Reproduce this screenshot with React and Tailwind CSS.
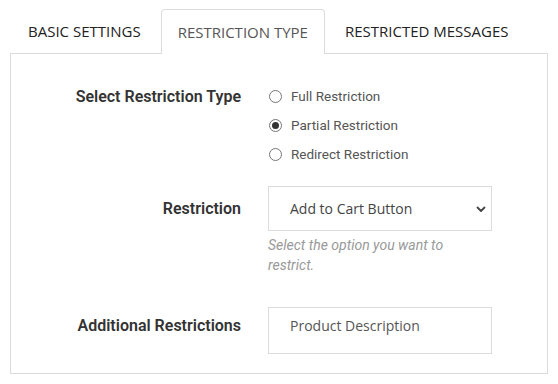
import React, { useState } from "react";

const tabs = ["BASIC SETTINGS", "RESTRICTION TYPE", "RESTRICTED MESSAGES"];
const types = ["Full Restriction", "Partial Restriction", "Redirect Restriction"];

const Radio = ({ checked }) => (
  <span className="flex h-[13px] w-[13px] items-center justify-center rounded-full border border-[#767676] bg-white">
    {checked && <span className="h-[7px] w-[7px] rounded-full bg-[#333]" />}
  </span>
);

export default function App() {
  const [active] = useState(1);
  const [type, setType] = useState(1);

  return (
    <div className="h-[384px] w-[558px] bg-white pl-[10px] pt-[9px] font-['Open_Sans',sans-serif]">
      <div className="flex h-[45px]">
        {tabs.map((t, i) => (
          <div
            key={t}
            className={`flex items-center text-[15px] ${
              i === active
                ? "relative z-10 rounded-t-[4px] border border-b-0 border-[#dcdcdc] bg-white px-[16px] text-[#555]"
                : "px-[18px] text-[#222]"
            } ${i === 0 ? "pr-[20px]" : ""} ${i === 2 ? "pl-[20px]" : ""}`}
          >
            {t}
          </div>
        ))}
      </div>
      <div className="-mt-px w-[538px] border border-[#dcdcdc] pb-[19px] pt-[28px]">
        <div className="grid grid-cols-[230px_224px] gap-x-[27px] font-['Roboto',sans-serif]">
          <div className="flex h-[29px] items-center justify-end text-[16px] font-semibold text-[#333]">
            Select Restriction Type
          </div>
          <div className="flex flex-col">
            {types.map((t, i) => (
              <label
                key={t}
                onClick={() => setType(i)}
                className="flex h-[29px] cursor-pointer items-center gap-[9px] pl-px text-[13.5px] text-[#555]"
              >
                <Radio checked={type === i} />
                {t}
              </label>
            ))}
          </div>

          <div className="mt-[17px] flex h-[45px] items-center justify-end text-[16px] font-semibold text-[#333]">
            Restriction
          </div>
          <div className="mt-[17px]">
            <div className="flex h-[45px] items-center justify-between border border-[#dcdcdc] pl-[21px] pr-[4px] font-['Open_Sans',sans-serif] text-[14px] text-[#444]">
              Add to Cart Button
              <svg width="12" height="12" viewBox="0 0 12 12" fill="none">
                <path d="M2.5 4.5 6 8l3.5-3.5" stroke="#444" strokeWidth="1.8" strokeLinecap="round" strokeLinejoin="round" />
              </svg>
            </div>
            <p className="mt-[4px] w-[195px] text-[14px] italic leading-[20px] text-[#999]">
              Select the option you want to restrict.
            </p>
          </div>

          <div className="mt-[32px] flex h-[38px] items-center justify-end text-[16px] font-semibold text-[#333]">
            Additional Restrictions
          </div>
          <div className="mt-[32px] h-[47px] border border-[#dcdcdc] pl-[21px] pt-[7px] font-['Open_Sans',sans-serif] text-[14px] text-[#555]">
            Product Description
          </div>
        </div>
      </div>
    </div>
  );
}
